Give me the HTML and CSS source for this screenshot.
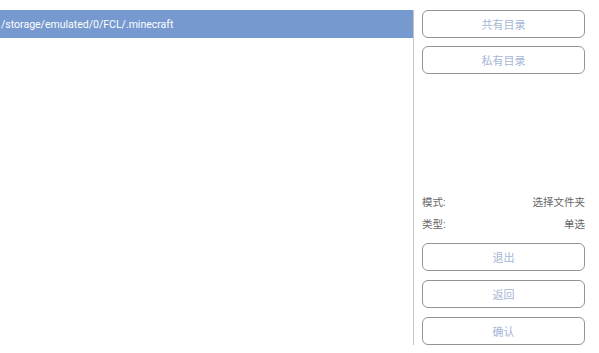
FILE: index.html
```html
<!DOCTYPE html>
<html lang="zh">
  <head>
    <meta charset="UTF-8" />
    <meta name="viewport" content="width=device-width, initial-scale=1.0" />
    <title>选择文件夹</title>
    <link rel="stylesheet" href="styles.css">
  </head>
  <body>
    <div class="container">
      <main class="file-list">
        <div class="file-item selected">/storage/emulated/0/FCL/.minecraft</div>
      </main>

      <div class="divider"></div>

      <aside class="side-panel">
        <div class="top-actions">
          <button class="panel-btn">共有目录</button>
          <button class="panel-btn">私有目录</button>
        </div>

        <div class="spacer"></div>

        <div class="info">
          <div class="info-row">
            <span class="info-label">模式:</span>
            <span class="info-value">选择文件夹</span>
          </div>
          <div class="info-row">
            <span class="info-label">类型:</span>
            <span class="info-value">单选</span>
          </div>
        </div>

        <div class="bottom-actions">
          <button class="panel-btn">退出</button>
          <button class="panel-btn">返回</button>
          <button class="panel-btn">确认</button>
        </div>
      </aside>
    </div>
  </body>
</html>
```

FILE: styles.css
```css
/* General */
body {
  margin: 0;
  padding: 0;
  background-color: #ffffff;
  font-family: Roboto, "Noto Sans CJK SC", sans-serif;
  font-size: 11px;
}

.container {
  display: flex;
  height: 353px;
  padding: 10px 0 8px;
  box-sizing: border-box;
}

/* File list */
.file-list {
  width: 413px;
  display: flex;
  flex-direction: column;
}

.file-item {
  height: 26px;
  line-height: 26px;
  padding: 2px 0 0 1px;
  color: #ffffff;
  font-size: 10.5px;
  white-space: nowrap;
}

.file-item.selected {
  background-color: #7699cf;
}

.divider {
  width: 1px;
  background-color: #c4c4c4;
}

/* Side panel */
.side-panel {
  flex: 1;
  display: flex;
  flex-direction: column;
  padding: 0 14px 0 8px;
}

.top-actions,
.bottom-actions {
  display: flex;
  flex-direction: column;
  gap: 8px;
}

.bottom-actions {
  gap: 9px;
}

.spacer {
  flex: 1;
}

.panel-btn {
  height: 28px;
  background: #ffffff;
  border: 1px solid #949494;
  border-radius: 6px;
  color: #a6b6d6;
  font-family: inherit;
  font-size: 11px;
  padding: 0;
  cursor: pointer;
}

/* Info rows */
.info {
  margin-bottom: 7px;
}

.info-row {
  display: flex;
  justify-content: space-between;
  line-height: 22px;
  font-size: 10.5px;
  color: #666666;
}
```
